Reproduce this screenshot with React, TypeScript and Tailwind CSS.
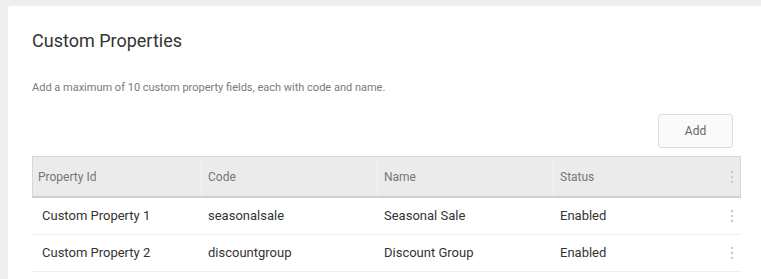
import React from "react";

const Kebab = () => (
  <svg width="4" height="14" viewBox="0 0 4 14" className="block">
    <rect x="1" y="1" width="2" height="2" fill="#c8c8c8" />
    <rect x="1" y="6" width="2" height="2" fill="#c8c8c8" />
    <rect x="1" y="11" width="2" height="2" fill="#c8c8c8" />
  </svg>
);

const rows = [
  { id: "Custom Property 1", code: "seasonalsale", name: "Seasonal Sale", status: "Enabled" },
  { id: "Custom Property 2", code: "discountgroup", name: "Discount Group", status: "Enabled" },
];

export default function App() {
  return (
    <div className="h-[279px] overflow-hidden bg-[#eeeeee] pl-[8px] pt-[6px]" style={{ fontFamily: "Roboto, 'Liberation Sans', sans-serif" }}>
      <div className="bg-white rounded-tl-[3px] pl-[24px] pr-[20px] pt-[22px] pb-[10px] min-h-[273px]">
        <h1 className="text-[18px] leading-[26px] text-[#333333] font-normal">Custom Properties</h1>
        <p className="mt-[26px] text-[11px] leading-[16px] text-[#7a7a7a]">
          Add a maximum of 10 custom property fields, each with code and name.
        </p>
        <div className="flex justify-end mt-[18px] pr-[8px]">
          <button className="w-[75px] h-[34px] border border-[#dddddd] rounded-[3px] bg-[#fafafa] text-[12px] text-[#666666]">
            Add
          </button>
        </div>
        <div className="mt-[8px]">
          <div className="flex h-[42px] bg-[#ebebeb] border border-[#d6d6d6] border-b-[2px] border-b-[#cfcfcf] text-[12px] text-[#777777] items-center">
            <div className="w-[169px] pl-[5px] h-full flex items-center border-r border-r-[#f4f4f4]">Property Id</div>
            <div className="w-[176px] pl-[6px] h-full flex items-center border-r border-r-[#f4f4f4]">Code</div>
            <div className="w-[176px] pl-[6px] h-full flex items-center border-r border-r-[#f4f4f4]">Name</div>
            <div className="flex-1 pl-[6px] h-full flex items-center">Status</div>
            <div className="w-[20px] flex items-center justify-end pr-[6px] h-full"><Kebab /></div>
          </div>
          {rows.map((r) => (
            <div key={r.id} className="flex h-[37px] items-center border-b border-b-[#f0f0f0] text-[13px] text-[#333333]">
              <div className="w-[170px] pl-[10px]">{r.id}</div>
              <div className="w-[176px] pl-[6px]">{r.code}</div>
              <div className="w-[176px] pl-[6px]">{r.name}</div>
              <div className="flex-1 pl-[6px]">{r.status}</div>
              <div className="w-[20px] flex items-center justify-end pr-[7px]"><Kebab /></div>
            </div>
          ))}
        </div>
      </div>
    </div>
  );
}
